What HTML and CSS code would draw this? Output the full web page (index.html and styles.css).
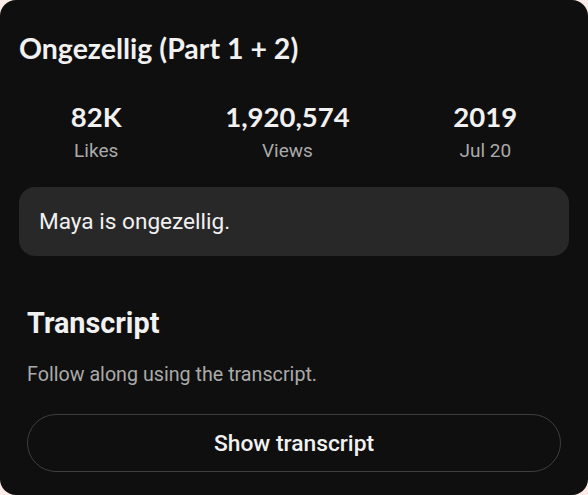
FILE: index.html
```html
<!DOCTYPE html>
<html lang="en">
<head>
  <meta charset="UTF-8" />
  <meta name="viewport" content="width=device-width, initial-scale=1.0" />
  <title>Ongezellig (Part 1 + 2)</title>
  <link rel="stylesheet" href="styles.css">
</head>
<body>
  <div class="card">
    <h1 class="title">Ongezellig (Part 1 + 2)</h1>

    <div class="stats">
      <div class="stat">
        <div class="stat-value">82K</div>
        <div class="stat-label">Likes</div>
      </div>
      <div class="stat">
        <div class="stat-value">1,920,574</div>
        <div class="stat-label">Views</div>
      </div>
      <div class="stat">
        <div class="stat-value">2019</div>
        <div class="stat-label">Jul 20</div>
      </div>
    </div>

    <div class="description">Maya is ongezellig.</div>

    <div class="transcript">
      <h2>Transcript</h2>
      <p>Follow along using the transcript.</p>
      <button class="transcript-btn">Show transcript</button>
    </div>
  </div>
</body>
</html>
```

FILE: styles.css
```css
* { box-sizing: border-box; }
body {
  margin: 0;
  padding: 0;
  background: #fcece7;
  font-family: Roboto, 'Noto Sans', sans-serif;
}
.card {
  width: 588px;
  height: 495px;
  background: #0f0f0f;
  border-radius: 16px;
  padding: 31px 19px 0;
  overflow: hidden;
}
.title {
  margin: 0;
  font-family: Lato, 'Open Sans', sans-serif;
  font-weight: 700;
  font-size: 28.5px;
  line-height: 34px;
  color: #f1f1f1;
}
.stats {
  display: flex;
  justify-content: space-around;
  margin-top: 36px;
}
.stat {
  text-align: center;
}
.stat-value {
  font-family: Lato, 'Open Sans', sans-serif;
  font-weight: 700;
  font-size: 27.5px;
  line-height: 32px;
  color: #f1f1f1;
}
.stat-label {
  margin-top: 6px;
  font-size: 19px;
  line-height: 24px;
  color: #aaaaaa;
}
.description {
  display: flex;
  align-items: center;
  height: 69px;
  margin-top: 24px;
  padding: 0 20px;
  background: #282828;
  border-radius: 16px;
  font-size: 22.6px;
  color: #f1f1f1;
}
.transcript {
  padding: 0 8px;
  margin-top: 50px;
}
.transcript h2 {
  margin: 0;
  font-size: 28.8px;
  line-height: 34px;
  font-weight: 700;
  color: #f1f1f1;
}
.transcript p {
  margin: 23px 0 0;
  font-size: 19.7px;
  line-height: 24px;
  color: #aaaaaa;
}
.transcript-btn {
  display: block;
  width: 100%;
  height: 58px;
  margin-top: 27px;
  background: transparent;
  border: 1.5px solid #3f3f3f;
  border-radius: 29px;
  font-family: Roboto, sans-serif;
  font-weight: 500;
  font-size: 22.8px;
  color: #f1f1f1;
  cursor: pointer;
}
```
